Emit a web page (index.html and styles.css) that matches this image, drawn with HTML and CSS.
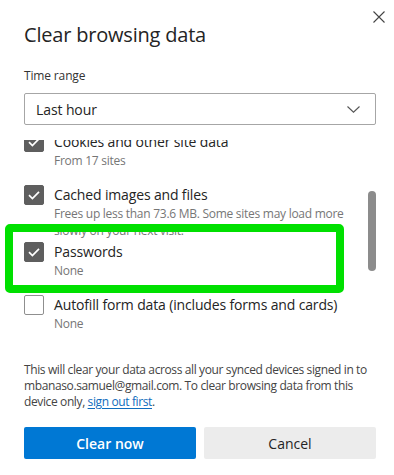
FILE: index.html
```html
<!DOCTYPE html>
<html lang="en">
<head>
<meta charset="utf-8">
<title>Clear browsing data</title>
<link rel="stylesheet" href="styles.css">
</head>
<body>
<div class="dialog">
  <button class="close" aria-label="Close">
    <svg width="12" height="12" viewBox="0 0 12 12"><path d="M0.5 0.5 L11.5 11.5 M11.5 0.5 L0.5 11.5" stroke="#444" stroke-width="1.1" fill="none"/></svg>
  </button>
  <h1 class="title">Clear browsing data</h1>
  <div class="label">Time range</div>
  <div class="select">
    <span>Last hour</span>
    <svg class="chev" width="13" height="7" viewBox="0 0 13 7"><path d="M0.5 0.5 L6.5 6.2 L12.5 0.5" stroke="#555" stroke-width="1.1" fill="none"/></svg>
  </div>
  <div class="viewport">
    <div class="list">
      <div class="item">
        <span class="box checked"><svg width="20" height="20" viewBox="0 0 20 20"><path d="M5 10.2 L8.4 13.6 L15 6.8" stroke="#fff" stroke-width="1.7" fill="none"/></svg></span>
        <div class="text"><div class="name">Cookies and other site data</div><div class="sub">From 17 sites</div></div>
      </div>
      <div class="item">
        <span class="box checked"><svg width="20" height="20" viewBox="0 0 20 20"><path d="M5 10.2 L8.4 13.6 L15 6.8" stroke="#fff" stroke-width="1.7" fill="none"/></svg></span>
        <div class="text"><div class="name">Cached images and files</div><div class="sub">Frees up less than 73.6 MB. Some sites may load more slowly on your next visit.</div></div>
      </div>
      <div class="item">
        <span class="box checked"><svg width="20" height="20" viewBox="0 0 20 20"><path d="M5 10.2 L8.4 13.6 L15 6.8" stroke="#fff" stroke-width="1.7" fill="none"/></svg></span>
        <div class="text"><div class="name">Passwords</div><div class="sub">None</div></div>
      </div>
      <div class="item">
        <span class="box"></span>
        <div class="text"><div class="name">Autofill form data (includes forms and cards)</div><div class="sub">None</div></div>
      </div>
    </div>
    <div class="thumb"></div>
  </div>
  <p class="note">This will clear your data across all your synced devices signed in to mbanaso.samuel@gmail.com. To clear browsing data from this device only, <a href="#">sign out first</a>.</p>
  <div class="actions">
    <button class="btn primary">Clear now</button>
    <button class="btn secondary">Cancel</button>
  </div>
  <div class="highlight"></div>
</div>
</body>
</html>
```
FILE: styles.css
```css
html, body {
  margin: 0;
  padding: 0;
  background: #fff;
}
body {
  font-family: "Open Sans", "Noto Sans", sans-serif;
  color: #242424;
}
.dialog {
  position: relative;
  width: 394px;
  height: 475px;
  box-sizing: border-box;
  padding: 21px 18px 0 24px;
  display: flex;
  flex-direction: column;
  overflow: hidden;
}
.close {
  position: absolute;
  left: 373px;
  top: 11px;
  width: 12px;
  height: 12px;
  padding: 0;
  border: 0;
  background: none;
  display: block;
}
.close svg { display: block; }
.title {
  margin: 0;
  font-size: 20px;
  line-height: 28px;
  font-weight: 400;
  letter-spacing: -0.2px;
  color: #242424;
}
.label {
  margin-top: 19px;
  font-size: 12px;
  line-height: 16px;
  letter-spacing: -0.15px;
  color: #333;
}
.select {
  margin-top: 9px;
  height: 32px;
  box-sizing: border-box;
  border: 1px solid #a6a6a6;
  border-radius: 2px;
  display: flex;
  align-items: center;
  justify-content: space-between;
  padding: 0 15px 0 11px;
  font-size: 14px;
  letter-spacing: -0.1px;
  color: #242424;
}
.chev { display: block; }
.viewport {
  position: relative;
  margin-top: 15px;
  height: 206px;
  overflow: hidden;
}
.list {
  margin-top: -8px;
  display: flex;
  flex-direction: column;
}
.item {
  display: flex;
  gap: 10px;
  min-height: 53px;
  box-sizing: border-box;
  padding-bottom: 3px;
  width: 330px;
}
.box {
  flex: none;
  width: 20px;
  height: 20px;
  box-sizing: border-box;
  border: 1px solid #8f8f8f;
  border-radius: 2px;
  background: #fff;
}
.box.checked {
  background: #5e5e5e;
  border-color: #5e5e5e;
}
.box svg { display: block; margin: -1px; }
.name {
  font-size: 14px;
  line-height: 20px;
  letter-spacing: -0.15px;
  color: #242424;
  white-space: nowrap;
}
.sub {
  font-size: 12px;
  line-height: 17px;
  letter-spacing: -0.27px;
  color: #767676;
}
.thumb {
  position: absolute;
  right: 0;
  top: 51px;
  width: 8px;
  height: 80px;
  border-radius: 4px;
  background: #8c8c8c;
}
.note {
  margin: 16px 0 0;
  font-size: 12px;
  line-height: 16px;
  letter-spacing: -0.38px;
  color: #444;
}
.note a {
  color: #0f6cbd;
  text-decoration: underline;
  text-underline-offset: 2px;
}
.actions {
  margin-top: 17px;
  display: flex;
  gap: 8px;
}
.btn {
  flex: 1;
  height: 32px;
  border: 0;
  border-radius: 2px;
  font-family: inherit;
  font-size: 14px;
}
.primary {
  background: #0078d4;
  color: #fff;
  font-weight: 600;
}
.secondary {
  background: #ececec;
  color: #242424;
}
.highlight {
  position: absolute;
  left: 5px;
  top: 224px;
  width: 339px;
  height: 69px;
  box-sizing: border-box;
  border: 8px solid #00e000;
  border-radius: 5px;
  pointer-events: none;
}
```
